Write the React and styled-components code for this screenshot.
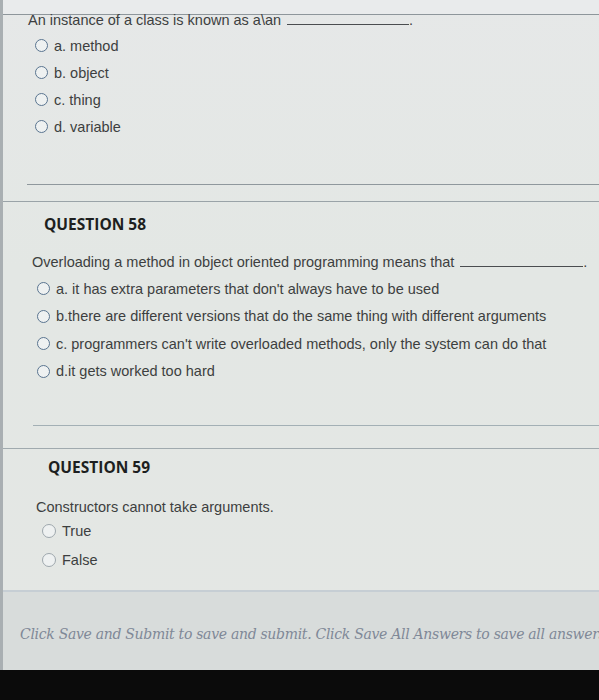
import React from 'react';
import styled, {createGlobalStyle} from 'styled-components';

const GlobalStyle = createGlobalStyle`
  html, body {
    margin: 0;
    padding: 0;
    background: #0b0b0b;
  }
  #root {
    width: 599px;
  }
`;

const Page = styled.div`
  height: 670px;
  box-sizing: border-box;
  border-left: 3px solid #a9afb2;
  background: linear-gradient(180deg, #e6e8e8 0%, #e3e7e4 40%, #e4e7e4 100%);
  font-family: "Liberation Sans", Arial, sans-serif;
  color: #3d3f40;
  overflow: hidden;
  display: flex;
  flex-direction: column;
`;

const TopRule = styled.div`
  height: 14px;
  flex: none;
  border-bottom: 1px solid #8e969b;
  background: #e9ebec;
`;

const Block = styled.div`
  padding-left: ${p => p.$indent}px;
  margin-top: ${p => p.$top || 0}px;
`;

const Heading = styled.div`
  font-family: "Open Sans", "Noto Sans", sans-serif;
  font-weight: 700;
  font-size: 15.5px;
  line-height: 20px;
  color: #1d1f20;
  margin-top: ${p => p.$top}px;
`;

const Prompt = styled.div`
  font-size: 14.5px;
  line-height: 18px;
  margin-top: ${p => p.$top}px;
  white-space: nowrap;
`;

const Blank = styled.span`
  display: inline-block;
  width: ${p => p.$width}px;
  margin-left: 6px;
  border-bottom: 1px solid #4a4d50;
  height: 12px;
  vertical-align: baseline;
`;

const OptionList = styled.div`
  display: flex;
  flex-direction: column;
`;

const Option = styled.label`
  display: flex;
  align-items: center;
  height: ${p => p.$row}px;
  font-size: 14.5px;
  white-space: nowrap;
`;

const Radio = styled.span`
  flex: none;
  box-sizing: border-box;
  width: ${p => (p.$faint ? 14 : 13)}px;
  height: ${p => (p.$faint ? 14 : 13)}px;
  border-radius: 50%;
  border: 1.5px solid ${p => (p.$faint ? '#9ea7ad' : '#5a7590')};
  background: #eef1f1;
  margin-right: 6px;
`;

const Divider = styled.div`
  height: 0;
  border-top: 1px solid ${p => p.$color || '#959ea3'};
  margin-left: ${p => p.$inset || 0}px;
  margin-top: ${p => p.$top}px;
`;

const Footer = styled.div`
  flex: 1;
  margin-top: 16px;
  border-top: 2px solid #c6ced4;
  background: #d8dcdb;
  padding: 33px 0 0 17px;
  white-space: nowrap;
  overflow: hidden;
`;

const FooterText = styled.div`
  font-family: "DejaVu Serif", "Liberation Serif", serif;
  font-style: italic;
  font-size: 14px;
  letter-spacing: -0.3px;
  line-height: 18px;
  color: #7f8897;
`;

const BlackBar = styled.div`
  height: 30px;
  background: #0b0b0b;
`;

const Choices = ({options, row, faint}) => (
  <OptionList>
    {options.map(text => (
      <Option key={text} $row={row}>
        <Radio $faint={faint} />
        {text}
      </Option>
    ))}
  </OptionList>
);

export default function App() {
  return (
    <>
      <GlobalStyle />
      <Page>
        <TopRule />

        <Block $indent={25}>
          <Prompt $top={-4}>
            An instance of a class is known as a\an<Blank $width={122} />.
          </Prompt>
          <Block $indent={7} $top={3}>
            <Choices
              row={27}
              options={['a. method', 'b. object', 'c. thing', 'd. variable']}
            />
          </Block>
        </Block>

        <Divider $inset={24} $top={44} $color="#8f989d" />
        <Divider $top={16} $color="#9aa3a8" />

        <Block $indent={41}>
          <Heading $top={12}>QUESTION 58</Heading>
        </Block>
        <Block $indent={29}>
          <Prompt $top={19}>
            Overloading a method in object oriented programming means that<Blank $width={123} />.
          </Prompt>
          <Block $indent={5} $top={4}>
            <Choices
              row={27.5}
              options={[
                "a. it has extra parameters that don't always have to be used",
                'b.there are different versions that do the same thing with different arguments',
                "c. programmers can't write overloaded methods, only the system can do that",
                'd.it gets worked too hard',
              ]}
            />
          </Block>
        </Block>

        <Divider $inset={30} $top={40} $color="#a3b0b5" />
        <Divider $top={22} $color="#a0aaae" />

        <Block $indent={45}>
          <Heading $top={8}>QUESTION 59</Heading>
        </Block>
        <Block $indent={33}>
          <Prompt $top={21}>Constructors cannot take arguments.</Prompt>
          <Block $indent={6} $top={0}>
            <Choices row={29} faint options={['True', 'False']} />
          </Block>
        </Block>

        <Footer>
          <FooterText>
            Click Save and Submit to save and submit. Click Save All Answers to save all answers.
          </FooterText>
        </Footer>
      </Page>
      <BlackBar />
    </>
  );
}
